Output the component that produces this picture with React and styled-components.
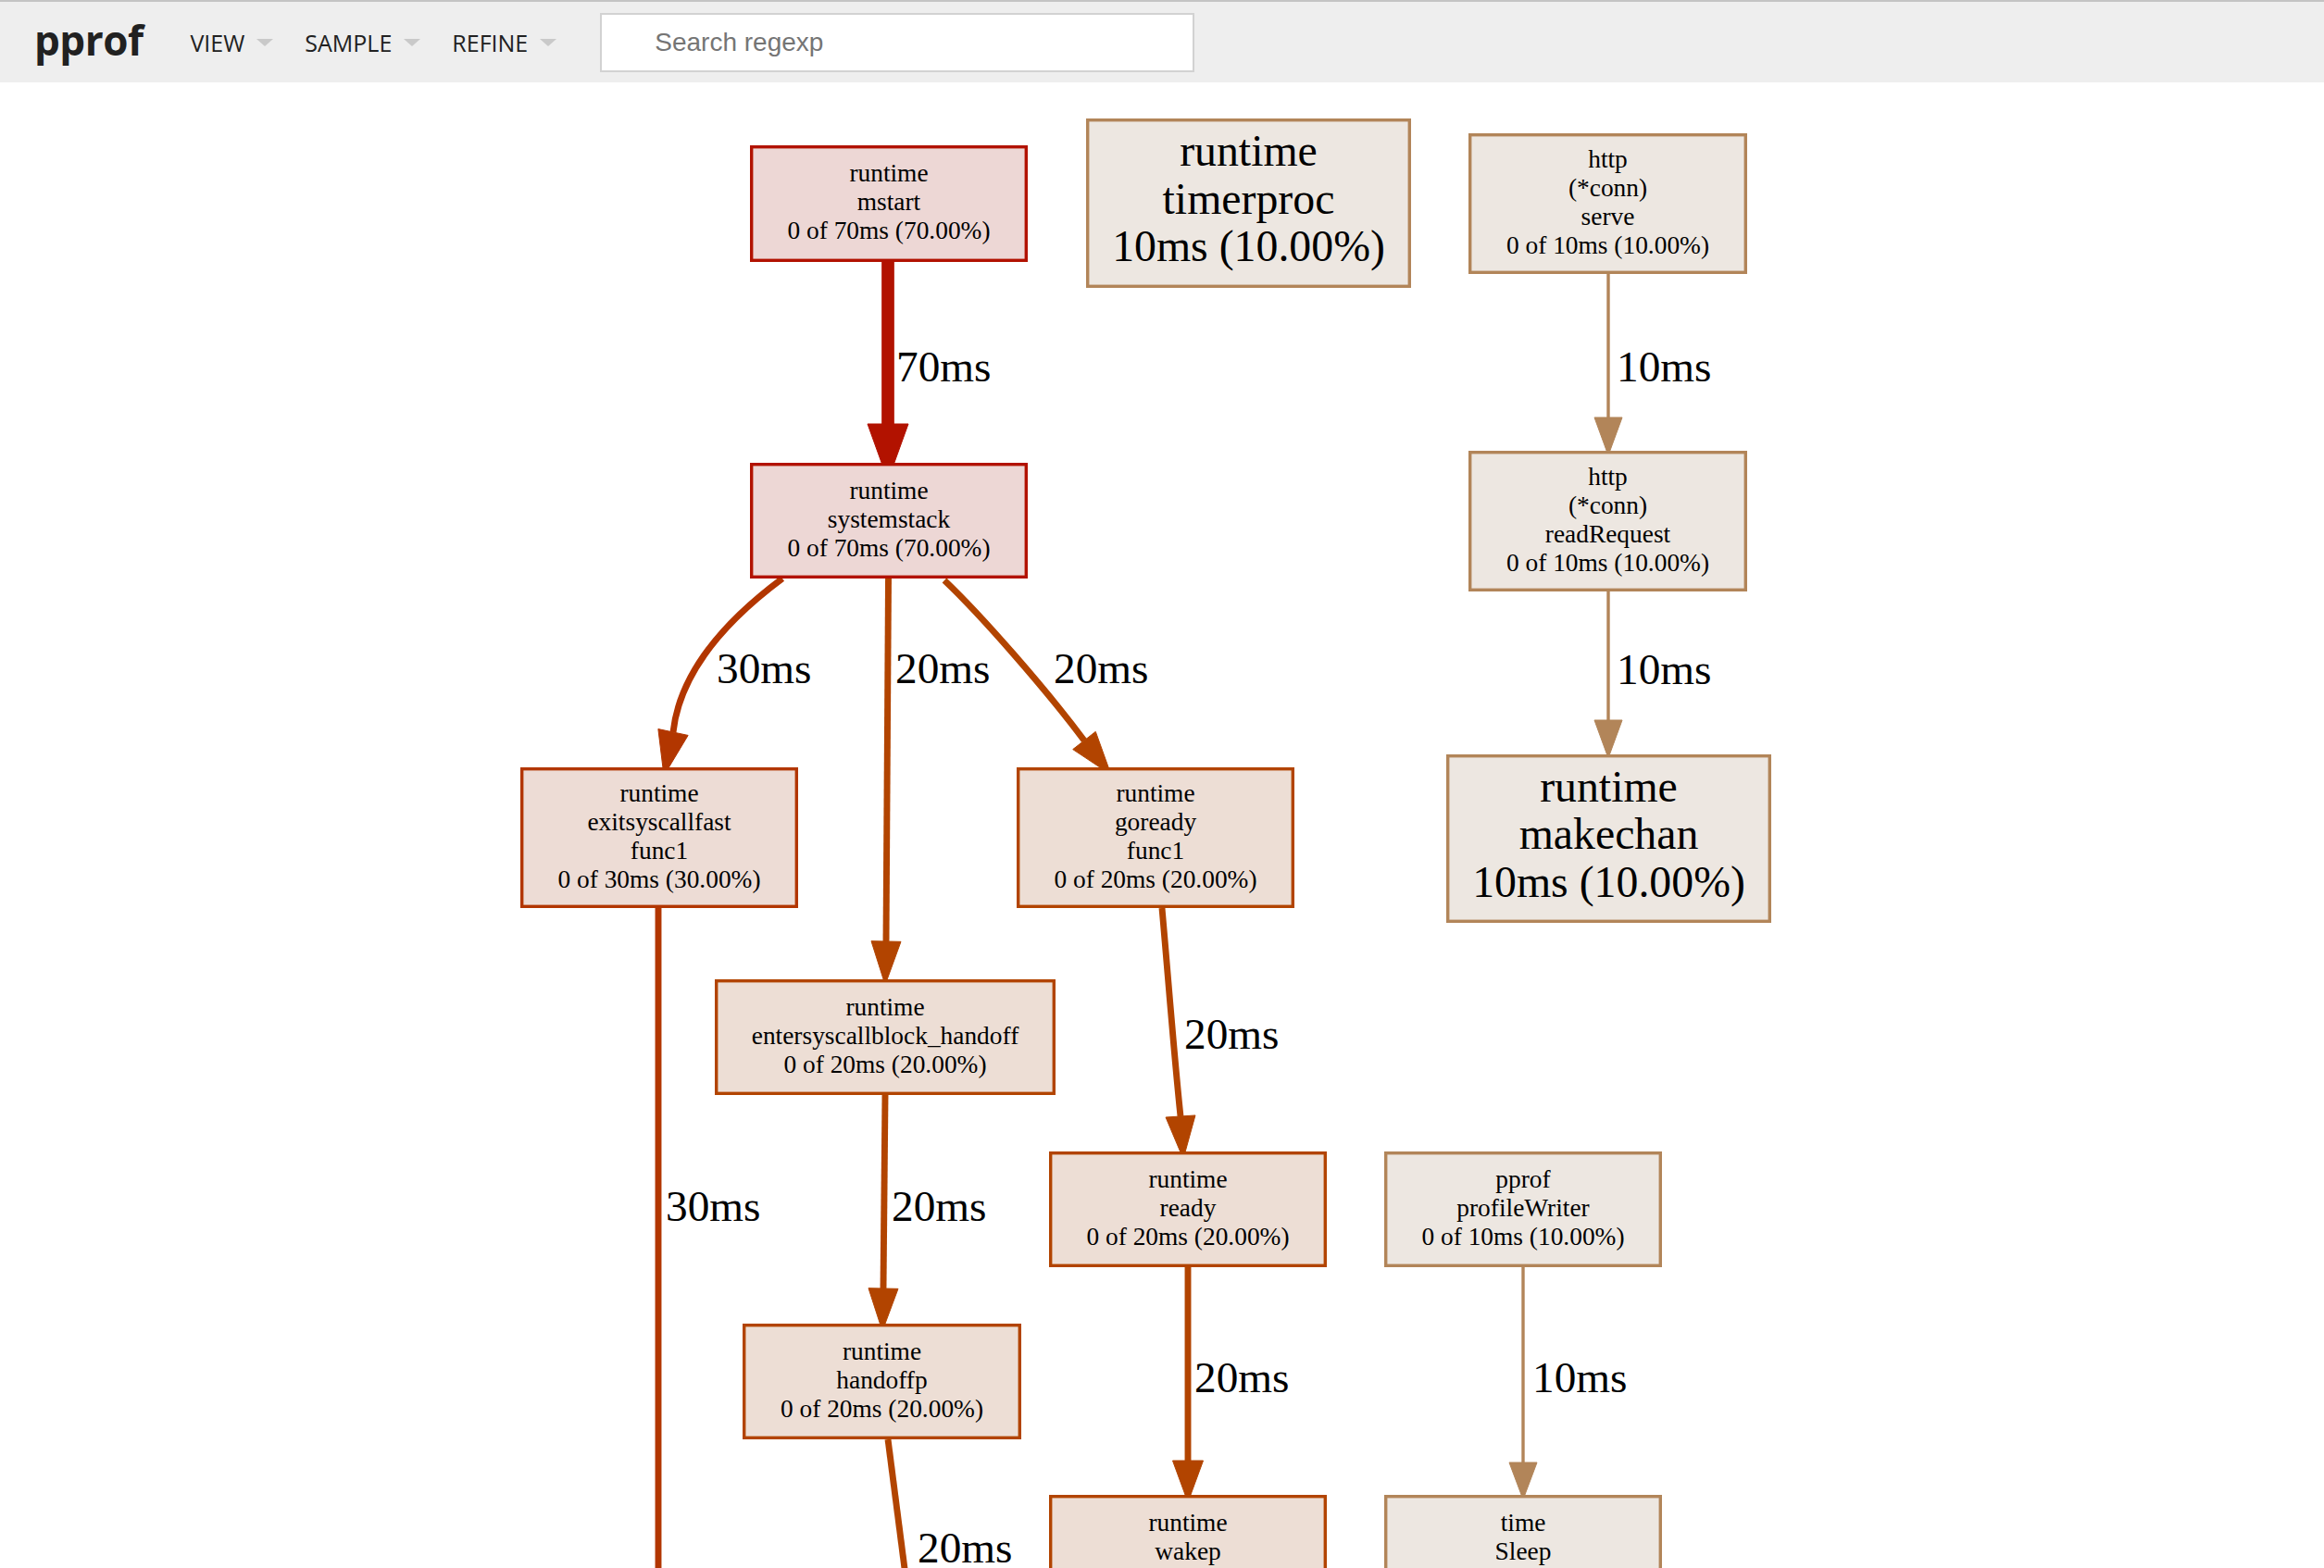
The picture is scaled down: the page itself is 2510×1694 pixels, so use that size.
import React from 'react';
import styled, { createGlobalStyle } from 'styled-components';

const GlobalStyle = createGlobalStyle`
  html, body {
    margin: 0;
    padding: 0;
    background: #ffffff;
    overflow: hidden;
  }
  body {
    font-family: "Open Sans", "Noto Sans", sans-serif;
  }
`;

const TONES = {
  hot: { fill: '#edd7d5', stroke: '#b21200' },
  warm30: { fill: '#eddcd5', stroke: '#b23600' },
  warm20: { fill: '#edded5', stroke: '#b24400' },
  cool: { fill: '#ede7e1', stroke: '#b28559' },
};

const Page = styled.div`
  display: flex;
  flex-direction: column;
  width: 100vw;
  height: 100vh;
`;

const Header = styled.header`
  display: flex;
  align-items: center;
  flex: 0 0 auto;
  height: 87px;
  background: #eeeeee;
  border-top: 2px solid #c4c4c4;
  padding-left: 37px;
`;

const Title = styled.h1`
  margin: 0 34px 6px 0;
  font-family: "Open Sans", "Noto Sans", sans-serif;
  font-weight: 700;
  font-size: 44px;
  line-height: 1;
  color: #212121;
  letter-spacing: -0.5px;
`;

const Menu = styled.nav`
  display: flex;
  align-items: center;
  height: 100%;
`;

const MenuItem = styled.div`
  display: flex;
  align-items: center;
  height: 100%;
  padding: 0 17px;
  font-family: "Open Sans", "Noto Sans", sans-serif;
  font-size: 25px;
  color: #212121;
  text-transform: uppercase;
  cursor: pointer;
`;

const Caret = styled.span`
  width: 0;
  height: 0;
  margin-left: 13px;
  border-top: 8px solid #c9c9c9;
  border-left: 9px solid transparent;
  border-right: 9px solid transparent;
`;

const Search = styled.input`
  box-sizing: border-box;
  width: 642px;
  height: 64px;
  margin-left: 30px;
  padding: 0 0 0 57px;
  border: 2px solid #d2d2d2;
  background: #ffffff;
  font-family: "Liberation Sans", Arial, sans-serif;
  font-size: 28px;
  color: #212121;
  outline: none;
  &::placeholder {
    color: #757575;
  }
`;

const Canvas = styled.main`
  flex: 1 1 auto;
  position: relative;
  overflow: hidden;
  background: #ffffff;
`;

const Graph = styled.svg`
  display: block;
`;

const NodeBox = styled.rect`
  fill: ${(p) => TONES[p.$tone].fill};
  stroke: ${(p) => TONES[p.$tone].stroke};
  stroke-width: 3.4px;
`;

const NodeText = styled.text`
  font-family: "Liberation Serif", "Times New Roman", serif;
  font-size: ${(p) => (p.$big ? 47.8 : 27.4)}px;
  fill: #000000;
  text-anchor: middle;
`;

const EdgeLine = styled.path`
  fill: none;
  stroke: ${(p) => p.$color};
  stroke-width: ${(p) => p.$width}px;
`;

const ArrowHead = styled.polygon`
  fill: ${(p) => p.$color};
  stroke: ${(p) => p.$color};
  stroke-width: 1px;
`;

const EdgeLabel = styled.text`
  font-family: "Liberation Serif", "Times New Roman", serif;
  font-size: 47.3px;
  fill: #000000;
`;

const NODES = [
  { id: 'mstart', x: 810, y: 157, w: 300, h: 126, tone: 'hot', lines: ['runtime', 'mstart', '0 of 70ms (70.00%)'] },
  { id: 'timerproc', x: 1173, y: 128, w: 351, h: 183, tone: 'cool', big: true, lines: ['runtime', 'timerproc', '10ms (10.00%)'] },
  { id: 'serve', x: 1586, y: 144, w: 301, h: 152, tone: 'cool', lines: ['http', '(*conn)', 'serve', '0 of 10ms (10.00%)'] },
  { id: 'systemstack', x: 810, y: 500, w: 300, h: 125, tone: 'hot', lines: ['runtime', 'systemstack', '0 of 70ms (70.00%)'] },
  { id: 'readRequest', x: 1586, y: 487, w: 301, h: 152, tone: 'cool', lines: ['http', '(*conn)', 'readRequest', '0 of 10ms (10.00%)'] },
  { id: 'exitsyscallfast', x: 562, y: 829, w: 300, h: 152, tone: 'warm30', lines: ['runtime', 'exitsyscallfast', 'func1', '0 of 30ms (30.00%)'] },
  { id: 'goready', x: 1098, y: 829, w: 300, h: 152, tone: 'warm20', lines: ['runtime', 'goready', 'func1', '0 of 20ms (20.00%)'] },
  { id: 'makechan', x: 1562, y: 815, w: 351, h: 182, tone: 'cool', big: true, lines: ['runtime', 'makechan', '10ms (10.00%)'] },
  { id: 'entersyscallblock', x: 772, y: 1058, w: 368, h: 125, tone: 'warm20', lines: ['runtime', 'entersyscallblock_handoff', '0 of 20ms (20.00%)'] },
  { id: 'ready', x: 1133, y: 1244, w: 300, h: 125, tone: 'warm20', lines: ['runtime', 'ready', '0 of 20ms (20.00%)'] },
  { id: 'profileWriter', x: 1495, y: 1244, w: 300, h: 125, tone: 'cool', lines: ['pprof', 'profileWriter', '0 of 10ms (10.00%)'] },
  { id: 'handoffp', x: 802, y: 1430, w: 301, h: 125, tone: 'warm20', lines: ['runtime', 'handoffp', '0 of 20ms (20.00%)'] },
  { id: 'wakep', x: 1133, y: 1615, w: 300, h: 125, tone: 'warm20', lines: ['runtime', 'wakep', '0 of 20ms (20.00%)'] },
  { id: 'sleep', x: 1495, y: 1615, w: 300, h: 125, tone: 'cool', lines: ['time', 'Sleep', '0 of 10ms (10.00%)'] },
];

const HOT = '#b21200';
const W30 = '#b23600';
const W20 = '#b24400';
const COOL = '#b28559';

const EDGES = [
  { d: 'M959,283 L959,458', color: HOT, width: 13.7, arrow: { base: [959, 458], tip: [959, 519], half: 22 }, label: { text: '70ms', x: 968, y: 412 } },
  { d: 'M845,625 C798,660 735,718 727,791', color: W30, width: 6.9, arrow: { base: [727, 791], tip: [717, 838], half: 16.5 }, label: { text: '30ms', x: 774, y: 738 } },
  { d: 'M959.5,625 L957,1017', color: W20, width: 6.9, arrow: { base: [957, 1017], tip: [956, 1064], half: 16 }, label: { text: '20ms', x: 967, y: 738 } },
  { d: 'M1020,627 C1060,665 1130,745 1171,800', color: W20, width: 6.9, arrow: { base: [1171, 800], tip: [1200, 837], half: 15.6 }, label: { text: '20ms', x: 1138, y: 738 } },
  { d: 'M1737,296 L1737,451', color: COOL, width: 3.4, arrow: { base: [1737, 451], tip: [1737, 492], half: 15 }, label: { text: '10ms', x: 1746, y: 412 } },
  { d: 'M1737,639 L1737,778', color: COOL, width: 3.4, arrow: { base: [1737, 778], tip: [1737, 819], half: 15 }, label: { text: '10ms', x: 1746, y: 739 } },
  { d: 'M711,981 L711,1800', color: W30, width: 6.9, label: { text: '30ms', x: 719, y: 1319 } },
  { d: 'M1255,981 C1262,1060 1268,1140 1275,1206', color: W20, width: 6.9, arrow: { base: [1275, 1206], tip: [1278, 1252], half: 16 }, label: { text: '20ms', x: 1279, y: 1133 } },
  { d: 'M956,1183 L954,1392', color: W20, width: 6.9, arrow: { base: [954, 1392], tip: [953, 1438], half: 16 }, label: { text: '20ms', x: 963, y: 1319 } },
  { d: 'M1283,1369 L1283,1578', color: W20, width: 6.9, arrow: { base: [1283, 1578], tip: [1283, 1623], half: 16.5 }, label: { text: '20ms', x: 1290, y: 1504 } },
  { d: 'M1645,1369 L1645,1580', color: COOL, width: 3.4, arrow: { base: [1645, 1580], tip: [1645, 1620], half: 15 }, label: { text: '10ms', x: 1655, y: 1504 } },
  { d: 'M959,1555 L979,1710', color: W20, width: 6.9, label: { text: '20ms', x: 991, y: 1688 } },
];

function arrowPoints({ base, tip, half }) {
  const dx = tip[0] - base[0];
  const dy = tip[1] - base[1];
  const len = Math.hypot(dx, dy) || 1;
  const nx = -dy / len;
  const ny = dx / len;
  const p1 = [base[0] + nx * half, base[1] + ny * half];
  const p2 = [base[0] - nx * half, base[1] - ny * half];
  return `${p1[0]},${p1[1]} ${tip[0]},${tip[1]} ${p2[0]},${p2[1]}`;
}

function Node({ node }) {
  const inset = 1.7;
  const cx = node.x + node.w / 2;
  const cy = node.y + node.h / 2;
  const n = node.lines.length;
  const pitch = node.big ? 51.5 : 31;
  const shift = node.big ? 11 : 7;
  return (
    <g>
      <NodeBox
        $tone={node.tone}
        x={node.x + inset}
        y={node.y + inset}
        width={node.w - inset * 2}
        height={node.h - inset * 2}
      />
      {node.lines.map((line, i) => (
        <NodeText key={i} $big={node.big} x={cx} y={cy + (i - (n - 1) / 2) * pitch + shift}>
          {line}
        </NodeText>
      ))}
    </g>
  );
}

function Edge({ edge }) {
  return (
    <g>
      <EdgeLine d={edge.d} $color={edge.color} $width={edge.width} />
      {edge.arrow && <ArrowHead points={arrowPoints(edge.arrow)} $color={edge.color} />}
      <EdgeLabel x={edge.label.x} y={edge.label.y}>
        {edge.label.text}
      </EdgeLabel>
    </g>
  );
}

export default function App() {
  return (
    <Page>
      <GlobalStyle />
      <Header>
        <Title>pprof</Title>
        <Menu>
          {['View', 'Sample', 'Refine'].map((name) => (
            <MenuItem key={name}>
              {name}
              <Caret />
            </MenuItem>
          ))}
        </Menu>
        <Search type="text" placeholder="Search regexp" />
      </Header>
      <Canvas>
        <Graph width="2510" height="1605" viewBox="0 89 2510 1605">
          {EDGES.map((e, i) => (
            <Edge key={i} edge={e} />
          ))}
          {NODES.map((n) => (
            <Node key={n.id} node={n} />
          ))}
        </Graph>
      </Canvas>
    </Page>
  );
}
